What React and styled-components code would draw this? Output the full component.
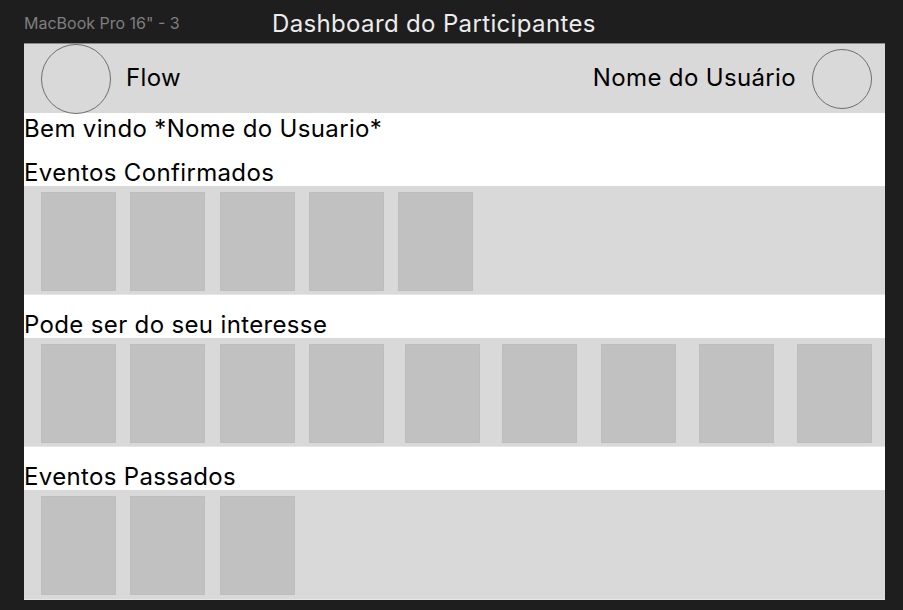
import React from 'react';
import styled, { createGlobalStyle } from 'styled-components';

const GlobalStyle = createGlobalStyle`
  * { box-sizing: border-box; }
  body {
    margin: 0;
    background: #1e1e1e;
    font-family: Inter, "Noto Sans", sans-serif;
  }
`;

const sections = [
  { title: 'Eventos Confirmados', gaps: [0, 14, 15, 14, 14] },
  { title: 'Pode ser do seu interesse', gaps: [0, 14, 15, 14, 21, 22, 24, 23, 23] },
  { title: 'Eventos Passados', gaps: [0, 14, 15] },
];

const App = () => {
  return (
    <>
      <GlobalStyle />
      <Page>
        <TitleBar>
          <FrameLabel>MacBook Pro 16" - 3</FrameLabel>
          <FrameTitle>Dashboard do Participantes</FrameTitle>
        </TitleBar>
        <Frame>
          <Header>
            <Brand>
              <Avatar $size={70} />
              <HeaderText>Flow</HeaderText>
            </Brand>
            <UserBox>
              <HeaderText>Nome do Usuário</HeaderText>
              <Avatar $size={60} />
            </UserBox>
          </Header>
          <Greeting>Bem vindo *Nome do Usuario*</Greeting>
          {sections.map((s, i) => (
            <React.Fragment key={s.title}>
              <SectionTitle>{s.title}</SectionTitle>
              <Shelf $last={i === sections.length - 1}>
                {s.gaps.map((g, j) => (
                  <Card key={j} $ml={g} />
                ))}
              </Shelf>
            </React.Fragment>
          ))}
        </Frame>
      </Page>
    </>
  );
};

export default App;

const Page = styled.div`
  width: 903px;
  height: 610px;
  padding-left: 24px;
  overflow: hidden;
`;

const TitleBar = styled.div`
  height: 43px;
  display: flex;
  align-items: center;
  padding-top: 3px;
`;

const FrameLabel = styled.div`
  width: 248px;
  font-size: 16px;
  color: #7f7f7f;
`;

const FrameTitle = styled.div`
  font-size: 24px;
  letter-spacing: 0.35px;
  color: #ececec;
`;

const Frame = styled.div`
  width: 861px;
  height: 557px;
  background: #ffffff;
  border-top: 1px solid #8a8a8a;
  display: flex;
  flex-direction: column;
`;

const Header = styled.div`
  height: 69px;
  background: #d9d9d9;
  display: flex;
  align-items: center;
  justify-content: space-between;
  padding: 0 13px 0 17px;
`;

const Brand = styled.div`
  display: flex;
  align-items: center;
  gap: 15px;
`;

const UserBox = styled.div`
  display: flex;
  align-items: center;
  gap: 16px;
`;

const Avatar = styled.div`
  width: ${p => p.$size}px;
  height: ${p => p.$size}px;
  border-radius: 50%;
  border: 1px solid #6e6e6e;
`;

const HeaderText = styled.span`
  font-size: 24px;
  letter-spacing: 0.35px;
  color: #000;
  padding-bottom: 2px;
`;

const Greeting = styled.div`
  height: 30px;
  padding-top: 4px;
  font-size: 24px;
  letter-spacing: 0.35px;
  line-height: 24px;
  color: #000;
`;

const SectionTitle = styled.div`
  height: 43px;
  display: flex;
  align-items: flex-end;
  padding-bottom: 1px;
  font-size: 24px;
  letter-spacing: 0.35px;
  line-height: 24px;
  color: #000;
`;

const Shelf = styled.div`
  height: ${p => (p.$last ? 110 : 109)}px;
  background: #d9d9d9;
  border-bottom: 1px solid #e6e6e6;
  display: flex;
  align-items: flex-start;
  padding: 6px 0 0 17px;
`;

const Card = styled.div`
  width: 75px;
  height: 99px;
  flex-shrink: 0;
  margin-left: ${p => p.$ml}px;
  background: #c1c1c1;
  border: 1px solid #bdbdbd;
`;
